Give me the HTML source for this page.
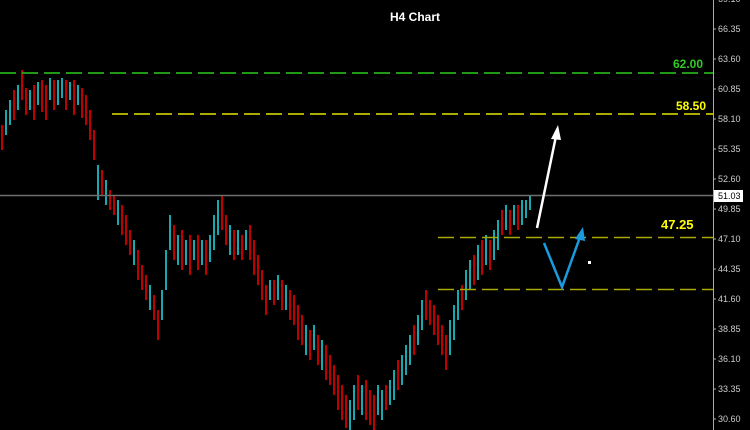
<!DOCTYPE html>
<html><head><meta charset="utf-8"><style>
html,body{margin:0;padding:0;background:#000;width:750px;height:430px;overflow:hidden}
svg{display:block}
text{font-family:"Liberation Sans",sans-serif}
</style></head><body>
<svg width="750" height="430" viewBox="0 0 750 430">
<rect width="750" height="430" fill="#000"/>
<path fill="none" stroke="#18a8b0" stroke-width="2" d="M6,110V135M10,100V125M18,85V110M30,90V110M38,82V105M50,78V100M58,80V105M62,78V98M70,82V100M78,85V105M98,165V200M106,180V205M118,200V225M134,240V265M150,285V310M162,290V320M166,250V290M170,215V250M178,235V265M186,240V265M194,240V260M202,240V265M210,235V262M214,215V250M218,200V235M230,225V255M238,230V255M246,230V250M270,280V300M278,275V300M286,285V310M306,325V355M314,325V350M322,340V370M350,400V430M354,385V420M362,385V415M378,385V415M382,390V420M390,380V405M394,370V400M402,355V385M406,345V375M410,335V365M418,315V345M422,300V330M450,320V355M454,305V340M458,290V320M466,270V300M470,260V290M478,245V280M486,235V265M494,230V260M498,220V250M506,205V230M514,205V225M522,200V225M526,200V218M530,195V210"/>
<path fill="none" stroke="#c00000" stroke-width="2" d="M2,125V150M14,90V120M22,70V100M26,88V115M34,85V120M42,80V112M46,85V120M54,80V110M66,80V110M74,80V115M82,88V118M86,95V125M90,110V140M94,130V160M102,170V195M110,190V210M114,195V215M122,205V235M126,215V245M130,230V255M138,250V280M142,265V290M146,275V300M154,295V320M158,310V340M174,225V260M182,230V270M190,235V275M198,235V270M206,240V275M222,195V230M226,215V245M234,230V260M242,235V260M250,225V260M254,240V275M258,255V285M262,270V300M266,285V315M274,280V305M282,280V310M290,290V320M294,295V325M298,305V340M302,315V345M310,330V360M318,335V365M326,345V380M330,355V385M334,365V395M338,375V410M342,385V420M346,395V428M358,375V410M366,380V420M370,390V425M374,395V430M386,385V410M398,360V390M414,325V355M426,290V320M430,300V325M434,305V335M438,315V345M442,325V355M446,335V370M462,285V310M474,255V285M482,240V275M490,240V270M502,210V235M510,210V235M518,205V230"/>
<line x1="0" y1="195.5" x2="713" y2="195.5" stroke="#6e6e6e" stroke-width="1.5"/>
<line x1="0" y1="73" x2="713" y2="73" stroke="#2ecc1e" stroke-width="1.5" stroke-dasharray="16,6"/>
<line x1="112" y1="114" x2="713" y2="114" stroke="#e6e600" stroke-width="1.5" stroke-dasharray="16,6"/>
<line x1="438" y1="237.5" x2="713" y2="237.5" stroke="#a8a800" stroke-width="1.5" stroke-dasharray="16,6"/>
<line x1="438" y1="289.5" x2="713" y2="289.5" stroke="#a8a800" stroke-width="1.5" stroke-dasharray="16,6"/>
<text x="673" y="68" font-size="12" font-weight="bold" fill="#2ecc1e">62.00</text>
<text x="676" y="110" font-size="12" font-weight="bold" fill="#ffff00">58.50</text>
<text x="661" y="229" font-size="13" font-weight="bold" fill="#ffff00">47.25</text>
<text x="390" y="21" font-size="12" font-weight="bold" fill="#fff">H4 Chart</text>
<line x1="537" y1="228" x2="556" y2="136" stroke="#fff" stroke-width="2.5"/>
<polygon points="558,125 551,139 561,140" fill="#fff"/>
<polyline points="544,243 562,287 580,237" fill="none" stroke="#1a9be0" stroke-width="2.5"/>
<polygon points="583,227 575,239 585,241" fill="#1a9be0"/>
<rect x="588" y="261" width="3" height="3" fill="#fff"/>
<line x1="713.5" y1="0" x2="713.5" y2="430" stroke="#aaa"/>
<g stroke="#aaa"><path d="M713,29h3M713,59h3M713,89h3M713,119h3M713,149h3M713,179h3M713,209h3M713,239h3M713,269h3M713,299h3M713,329h3M713,359h3M713,389h3M713,419h3"/></g>
<g font-size="9" fill="#ccc">
<text x="718" y="2">69.10</text>
<text x="718" y="32">66.35</text><text x="718" y="62">63.60</text><text x="718" y="92">60.85</text><text x="718" y="122">58.10</text><text x="718" y="152">55.35</text><text x="718" y="182">52.60</text><text x="718" y="212">49.85</text><text x="718" y="242">47.10</text><text x="718" y="272">44.35</text><text x="718" y="302">41.60</text><text x="718" y="332">38.85</text><text x="718" y="362">36.10</text><text x="718" y="392">33.35</text><text x="718" y="422">30.60</text>
</g>
<rect x="714" y="190" width="29" height="12" fill="#fff"/>
<text x="718" y="199" font-size="9" fill="#000">51.03</text>
</svg>
</body></html>
